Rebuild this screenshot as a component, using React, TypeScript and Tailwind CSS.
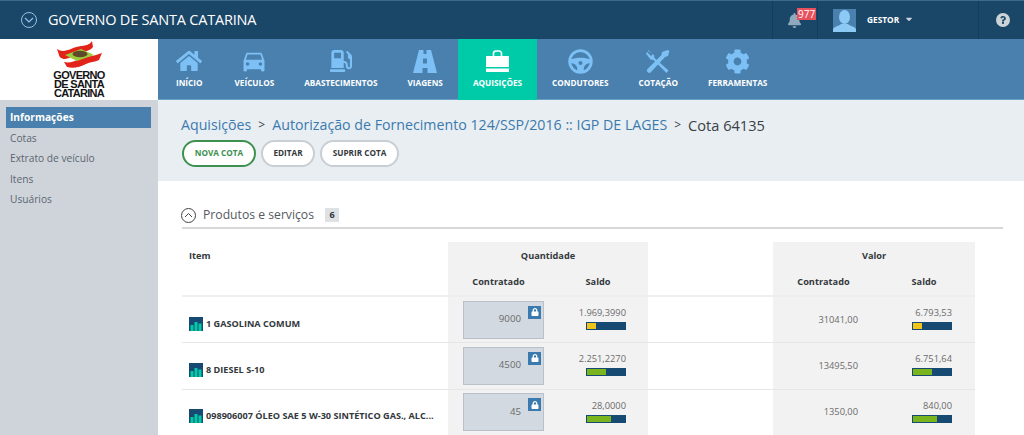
import { FaHome, FaCog, FaGasPump, FaLock, FaQuestion, FaBell, FaCaretDown } from "react-icons/fa";
import { MdDirectionsCar } from "react-icons/md";
import type { ReactNode } from "react";

const sans = "font-['Open_Sans',sans-serif]";

const RoadIcon = () => (
  <svg width="24" height="23" viewBox="0 0 24 23" fill="#7cc0f5">
    <path d="M6 0h4.500v4h3V0H18l6 23h-9.500v-5h-5v5H0z" />
    <path d="M10 8.500h4v5h-4z" fill="#4a80ad" />
  </svg>
);

const BagIcon = () => (
  <svg width="23" height="23" viewBox="0 0 23 23">
    <path d="M7.500 6V3.500a2.500 2.500 0 0 1 2.500-2.500h3a2.500 2.500 0 0 1 2.500 2.500V6" fill="none" stroke="#fff" strokeWidth="1.600" />
    <path d="M0 6h23v11H0z" fill="#fff" />
    <path d="M0 18.500h23V22H0z" fill="#fff" />
  </svg>
);

const WheelIcon = () => (
  <svg width="25" height="25" viewBox="0 0 25 25" fill="none" stroke="#7cc0f5">
    <circle cx="12.500" cy="12.500" r="10.800" strokeWidth="2.800" />
    <path d="M2.500 10.500c6-2.500 14-2.500 20 0l-.5 3.500c-3 .5-5 1.500-6 4l-.5 5h-6l-.5-5c-1-2.500-3-3.500-6-4z" fill="#7cc0f5" stroke="none" />
    <circle cx="12.500" cy="14" r="2" fill="#4a80ad" stroke="none" />
  </svg>
);

const ToolsIcon = () => (
  <svg width="24" height="24" viewBox="0 0 24 24" fill="#7cc0f5">
    <path d="M2 1l6 5 .5 3 14 12.500-2 2.500L7.500 11l-3-.5L0 4.500 1 3l4 4 2-2-5-3z" />
    <path d="M23.500 2l-1.500 5-3 1L5 23a2 2 0 0 1-3.500-3L15.500 6l.5-3 5.500-2z" />
  </svg>
);

const NavItem = ({ icon, label, active }: { icon: ReactNode; label: string; active?: boolean }) => (
  <div className={`flex h-[61px] flex-col items-center px-[15px] ${active ? "bg-[#00cba9]" : ""}`}>
    <div className="mt-[10px] flex h-[24px] items-center justify-center text-[#7cc0f5]">{icon}</div>
    <span className="mt-[3px] text-[8.200px] leading-[14px] font-bold whitespace-nowrap text-white">{label}</span>
  </div>
);

const Logo = () => (
  <div className="flex h-[61px] w-[158px] shrink-0 flex-col items-center bg-white pt-[2px]">
    <svg width="46" height="28" viewBox="0 0 46 28">
      <path d="M1 8c4 3 9 2 14 0 6-3 12-3 16-4 2-1 4-2 5-4l1 6c-2 3-6 4-10 5-6 1-12 6-18 7-3 0-6-2-6-4z" fill="#e2231a" />
      <path d="M8 21c5 1 10 0 15-3 6-3 12-2 17-4 2-1 4-1 6-2l-3 7c-4 2-9 2-13 4-6 3-13 5-19 3z" fill="#e2231a" />
      <path d="M9 14l16-6 13 6-17 6z" fill="#9ccb3b" />
      <ellipse cx="24" cy="13" rx="7.500" ry="3.200" fill="#5d4a2a" />
    </svg>
    <div className="mt-[2px] text-center text-[11px] leading-[9px] font-bold tracking-[-0.7px] text-[#151515] font-['Liberation_Sans',sans-serif]">
      GOVERNO<br />DE SANTA<br />CATARINA
    </div>
  </div>
);

const Bar = ({ pct, color }: { pct: number; color: string }) => (
  <div className="mt-[2px] ml-auto h-[8px] w-[40px] border border-[#174a73] bg-[#174a73]">
    <div className="h-full" style={{ width: `${pct}%`, background: color }} />
  </div>
);

const rows = [
  { name: "1 GASOLINA COMUM", qty: "9000", saldo: "1.969,3990", qp: 23, qc: "#f0c419", val: "31041,00", vs: "6.793,53", vp: 23, vc: "#f0c419" },
  { name: "8 DIESEL S-10", qty: "4500", saldo: "2.251,2270", qp: 50, qc: "#7ab51d", val: "13495,50", vs: "6.751,64", vp: 50, vc: "#7ab51d" },
  { name: "098906007 ÓLEO SAE 5 W-30 SINTÉTICO GAS., ALC...", qty: "45", saldo: "28,0000", qp: 62, qc: "#7ab51d", val: "1350,00", vs: "840,00", vp: 62, vc: "#7ab51d" },
];

const ItemIcon = () => (
  <svg width="14" height="14" viewBox="0 0 14 14" className="shrink-0">
    <rect width="14" height="14" fill="#174a73" />
    <path d="M1.500 8h3v6h-3zM5.500 5h3v9h-3zM9.500 6.500h3V14h-3z" fill="#00cba9" />
  </svg>
);

export default function App() {
  return (
    <div className={`${sans} h-[435px] w-[1024px] overflow-hidden bg-white`}>
      <header className="flex h-[39px] items-center border-t border-[#3d6a8c] bg-[#1a4668]">
        <div className="ml-[21px] flex h-[16px] w-[16px] items-center justify-center rounded-full border border-[#8fc5ee]">
          <svg width="10" height="6" viewBox="0 0 10 6" fill="none" stroke="#8fc5ee" strokeWidth="1.200"><path d="M1 1l4 4 4-4" /></svg>
        </div>
        <span className="ml-[11px] text-[14.500px] tracking-[-0.2px] text-white">GOVERNO DE SANTA CATARINA</span>
        <div className="ml-auto flex h-full items-center">
          <div className="relative flex h-full w-[45px] items-center justify-center border-l border-[#163c59]">
            <FaBell className="mr-[2px] text-[#8fa9bd]" size={15} />
            <span className="absolute top-[7px] left-[24px] bg-[#e8505b] px-[1px] text-[10px] leading-[12px] text-white">977</span>
          </div>
          <div className="flex h-full w-[162px] items-center border-x border-[#163c59] pl-[15px]">
            <div className="h-[23px] w-[23px] overflow-hidden bg-[#4a80ad]">
              <svg width="23" height="23" viewBox="0 0 23 23" fill="#8ccaf5">
                <ellipse cx="11.500" cy="8" rx="5.500" ry="7" />
                <path d="M0 23v-3c2-3 6-3 8-5h7c2 2 6 2 8 5v3z" />
              </svg>
            </div>
            <span className="ml-[11px] text-[8.300px] font-bold text-white">GESTOR</span>
            <FaCaretDown className="mb-[3px] ml-[5px] text-[#c9d3db]" size={10} />
          </div>
          <div className="flex h-full w-[45px] items-center justify-center pl-[3px]">
            <div className="flex h-[14px] w-[14px] items-center justify-center rounded-full bg-[#ced3d8]">
              <FaQuestion className="text-[#1a4668]" size={8} />
            </div>
          </div>
        </div>
      </header>

      <div className="flex">
        <Logo />
        <nav className="flex h-[61px] flex-1 border-b border-[#6ba0c6] bg-[#4a80ad] pl-[3px]">
          <NavItem icon={<FaHome size={26} />} label="INÍCIO" />
          <div className="w-[2px]" />
          <NavItem icon={<MdDirectionsCar size={28} />} label="VEÍCULOS" />
          <NavItem icon={<FaGasPump size={22} />} label="ABASTECIMENTOS" />
          <NavItem icon={<RoadIcon />} label="VIAGENS" />
          <NavItem icon={<BagIcon />} label="AQUISIÇÕES" active />
          <NavItem icon={<WheelIcon />} label="CONDUTORES" />
          <NavItem icon={<ToolsIcon />} label="COTAÇÃO" />
          <NavItem icon={<FaCog size={25} />} label="FERRAMENTAS" />
        </nav>
      </div>

      <div className="flex h-[335px]">
        <aside className="w-[158px] shrink-0 bg-[#cfd4da] pt-[7px] pr-[7px] pl-[6px] text-[10.200px] text-[#5c6670]">
          <div className="flex h-[21px] items-center bg-[#4a80ad] pl-[4px] font-bold text-white">Informações</div>
          <div className="flex h-[20.500px] items-center pl-[4px]">Cotas</div>
          <div className="flex h-[20.500px] items-center pl-[4px]">Extrato de veículo</div>
          <div className="flex h-[20.500px] items-center pl-[4px]">Itens</div>
          <div className="flex h-[20.500px] items-center pl-[4px]">Usuários</div>
        </aside>

        <main className="flex-1">
          <div className="h-[81px] bg-[#e8eef2] pt-[14px] pl-[23px]">
            <div className="flex items-center text-[14.200px] leading-[22px] text-[#3a3f44]">
              <span className="text-[#3b7aae]">Aquisições</span>
              <span className="mx-[7px] text-[12px]">&gt;</span>
              <span className="text-[#3b7aae]">Autorização de Fornecimento 124/SSP/2016 :: IGP DE LAGES</span>
              <span className="mx-[7px] text-[12px]">&gt;</span>
              <span className="text-[14.600px]">Cota 64135</span>
            </div>
            <div className="mt-[4px] ml-[1px] flex gap-[5px] text-[8.200px] font-bold">
              <button className="h-[27px] w-[74px] rounded-[13.500px] border-2 border-[#3d9150] bg-white text-[#3d9150]">NOVA COTA</button>
              <button className="h-[27px] w-[54px] rounded-[13.500px] border-2 border-[#c9ced3] bg-white text-[#33383d]">EDITAR</button>
              <button className="h-[27px] w-[79px] rounded-[13.500px] border-2 border-[#c9ced3] bg-white text-[#33383d]">SUPRIR COTA</button>
            </div>
          </div>

          <section className="mr-[21px] ml-[24px] pt-[24px]">
            <div className="flex h-[24px] items-center border-b-2 border-[#d5d7d9] pb-[2px]">
              <div className="-ml-[1px] flex h-[15px] w-[15px] items-center justify-center rounded-full border border-[#444]">
                <svg width="9" height="6" viewBox="0 0 9 6" fill="none" stroke="#444"><path d="M1 5l3.500-3.500L8 5" /></svg>
              </div>
              <span className="ml-[7px] text-[12.200px] text-[#55595d]">Produtos e serviços</span>
              <span className="ml-[11px] flex h-[14px] w-[14px] items-center justify-center bg-[#dfe2e5] text-[9px] font-bold text-[#333]">6</span>
            </div>

            <table className="mt-[13px] w-[793px] table-fixed border-collapse text-[9.200px] text-[#33383d]">
              <colgroup>
                <col className="w-[266px]" />
                <col className="w-[100px]" />
                <col className="w-[100px]" />
                <col className="w-[125px]" />
                <col className="w-[100px]" />
                <col className="w-[102px]" />
              </colgroup>
              <thead className="font-bold">
                <tr className="h-[27px]">
                  <th className="pl-[7px] text-left font-bold">Item</th>
                  <th colSpan={2} className="bg-[#f2f2f2] font-bold">Quantidade</th>
                  <th />
                  <th colSpan={2} className="bg-[#f2f2f2] font-bold">Valor</th>
                </tr>
                <tr className="h-[27px] border-b-2 border-[#eeeeee]">
                  <th />
                  <th className="bg-[#f2f2f2] pl-[1px] font-bold">Contratado</th>
                  <th className="bg-[#f2f2f2] font-bold">Saldo</th>
                  <th />
                  <th className="bg-[#f2f2f2] pl-[1px] font-bold">Contratado</th>
                  <th className="bg-[#f2f2f2] font-bold">Saldo</th>
                </tr>
              </thead>
              <tbody>
                {rows.map((r) => (
                  <tr key={r.name} className="h-[46.500px] border-b border-[#e4e6e8]">
                    <td className="pt-[8px] pl-[7px]">
                      <div className="flex items-center gap-[3px] text-[9.150px] font-bold whitespace-nowrap">
                        <ItemIcon />
                        <span>{r.name}</span>
                      </div>
                    </td>
                    <td className="bg-[#f2f2f2] pl-[15px]">
                      <div className="relative flex h-[38px] w-[81px] items-center justify-end border border-[#b9c0c7] bg-[#d2d9e0] pr-[22px] text-[9.700px] text-[#6b6b6b]">
                        {r.qty}
                        <span className="absolute top-[4px] right-[2px] flex h-[13px] w-[13px] items-center justify-center bg-[#3b7aae] text-white">
                          <FaLock size={8} />
                        </span>
                      </div>
                    </td>
                    <td className="bg-[#f2f2f2] pr-[22px] pb-[3px] text-right text-[9.300px] text-[#6b6b6b]">
                      <div className="leading-[14px]">{r.saldo}</div>
                      <Bar pct={r.qp} color={r.qc} />
                    </td>
                    <td />
                    <td className="bg-[#f2f2f2] pr-[15px] text-right text-[9.300px] text-[#6b6b6b]">{r.val}</td>
                    <td className="bg-[#f2f2f2] pr-[23px] pb-[3px] text-right text-[9.300px] text-[#6b6b6b]">
                      <div className="leading-[14px]">{r.vs}</div>
                      <Bar pct={r.vp} color={r.vc} />
                    </td>
                  </tr>
                ))}
              </tbody>
            </table>
          </section>
        </main>
      </div>
    </div>
  );
}
